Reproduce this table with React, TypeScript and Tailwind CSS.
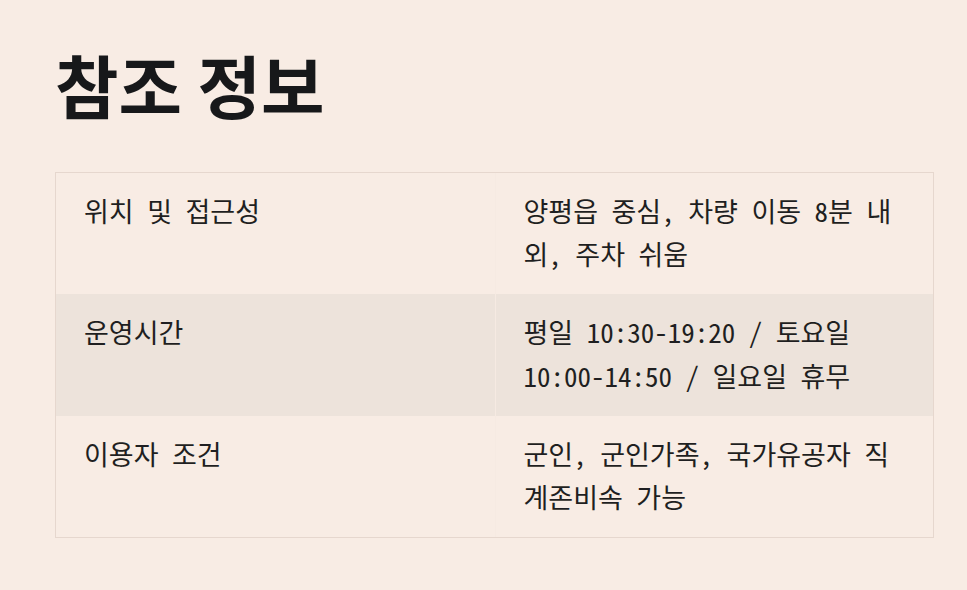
import React from "react";

const rows = [
  { k: "위치 및 접근성", v: "양평읍 중심, 차량 이동 8분 내외, 주차 쉬움", alt: false },
  { k: "운영시간", v: "평일 10:30-19:20 / 토요일 10:00-14:50 / 일요일 휴무", alt: true },
  { k: "이용자 조건", v: "군인, 군인가족, 국가유공자 직계존비속 가능", alt: false },
];

export default function App() {
  return (
    <div className="min-h-[590px] w-full bg-[#f8ece4] pl-[55px] pt-[44px] text-[#1f1f21]">
      <h1 className="m-0 font-['Noto_Sans_CJK_KR',sans-serif] text-[69px] font-bold leading-[80px] text-[#17181a]">
        참조 정보
      </h1>
      <div className="mt-[48px] w-[879px] border border-[#e6d7ce] font-['Noto_Sans_Mono_CJK_KR',monospace] text-[27px] leading-[1.6]">
        {rows.map((r, i) => (
          <div key={i} className={`grid grid-cols-2 ${r.alt ? "bg-[#ede3db]" : "bg-[#f8ece4]"}`}>
            <div className="px-[28px] pt-[16px] pb-[19px]">{r.k}</div>
            <div className="border-l border-[#f6eae2] px-[28px] pt-[16px] pb-[19px]">{r.v}</div>
          </div>
        ))}
      </div>
    </div>
  );
}
